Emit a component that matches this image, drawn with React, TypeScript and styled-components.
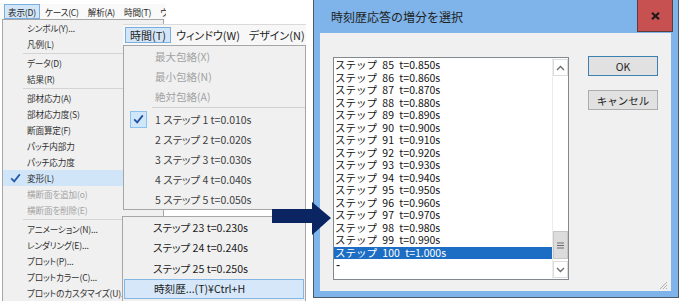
import React from "react";
import styled, { createGlobalStyle } from "styled-components";

const GlobalStyle = createGlobalStyle`
  html, body { margin: 0; padding: 0; background: #ffffff; }
  body { font-family: "Noto Sans CJK JP", "Noto Sans", sans-serif; }
  *, *::before, *::after { box-sizing: border-box; }
`;

const Stage = styled.div`
  position: relative;
  width: 680px;
  height: 301px;
  overflow: hidden;
  background: #ffffff;
`;

/* ---------- first window clip: menu bar + 表示 menu ---------- */
const MainClip = styled.div`
  position: absolute;
  left: 0;
  top: 4px;
  width: 166px;
  height: 297px;
  display: flex;
  flex-direction: column;
`;

const MenuBarTop = styled.div`
  height: 16px;
  display: flex;
  align-items: stretch;
  gap: 1px;
  padding-left: 4px;
  background: #f9f9f9;
  overflow: hidden;
  white-space: nowrap;
`;

const BarItem = styled.div<{ $active?: boolean; $size: number; $pad: number; $tight?: boolean }>`
  display: flex;
  align-items: center;
  padding: 0 ${(p) => p.$pad}px;
  font-size: ${(p) => p.$size}px;
  letter-spacing: ${(p) => (p.$tight ? "-0.2px" : "0")};
  font-feature-settings: "palt";
  color: #262626;
  background: ${(p) => (p.$active ? "#d3e6f8" : "transparent")};
  border: 1px solid ${(p) => (p.$active ? "#7aaee0" : "transparent")};
  flex-shrink: 0;
`;

const DisplayMenu = styled.div`
  margin-left: 2px;
  width: 162px;
  flex: 1;
  background: #f0f0f0;
  border: 1px solid #a6a6a6;
  border-bottom: none;
  display: flex;
  flex-direction: column;
`;

const SmallRow = styled.div<{ $active?: boolean; $disabled?: boolean }>`
  height: 16px;
  display: flex;
  align-items: center;
  font-size: 8.6px;
  letter-spacing: -0.15px;
  font-feature-settings: "palt";
  white-space: nowrap;
  color: ${(p) => (p.$disabled ? "#a4a4a4" : "#303030")};
  background: ${(p) => (p.$active ? "#d1e5f8" : "transparent")};
`;

const SmallGutter = styled.span`
  width: 24px;
  height: 100%;
  display: flex;
  align-items: center;
  justify-content: center;
  flex-shrink: 0;
`;

const SmallSeparator = styled.div`
  height: 3px;
  margin-left: 20px;
  display: flex;
  align-items: center;
  &::after {
    content: "";
    display: block;
    width: 100%;
    height: 1px;
    background: #d4d4d4;
  }
`;

/* ---------- 時間 menu clip ---------- */
const TimeClip = styled.div`
  position: absolute;
  left: 123px;
  top: 24px;
  width: 183px;
  display: flex;
  flex-direction: column;
`;

const MenuBarTime = styled.div`
  height: 21px;
  display: flex;
  align-items: center;
  padding-left: 2px;
  background: #f7f7f7;
  border-top: 1px solid #dadada;
  white-space: nowrap;
  overflow: hidden;
  & > div {
    height: 16px;
  }
`;

const TimeMenu = styled.div`
  background: #f0f0f0;
  border: 1px solid #a6a6a6;
  display: flex;
  flex-direction: column;
`;

const TimeRow = styled.div<{ $disabled?: boolean }>`
  height: 20px;
  display: flex;
  align-items: center;
  font-size: 10.5px;
  font-feature-settings: "palt";
  white-space: nowrap;
  color: ${(p) => (p.$disabled ? "#a2a2a2" : "#404040")};
`;

const TimeGutter = styled.span`
  width: 29px;
  height: 100%;
  display: flex;
  align-items: center;
  justify-content: center;
  flex-shrink: 0;
  margin-right: 2px;
`;

const CheckBox = styled.span`
  width: 17px;
  height: 17px;
  display: flex;
  align-items: center;
  justify-content: center;
  background: #cfe6fb;
  border: 1px solid #8cc2f0;
`;

const TimeSeparator = styled.div`
  height: 3px;
  margin-left: 28px;
  display: flex;
  align-items: center;
  &::after {
    content: "";
    display: block;
    width: 100%;
    height: 1px;
    background: #d2d2d2;
  }
`;

/* ---------- history menu clip ---------- */
const HistoryClip = styled.div`
  position: absolute;
  left: 122px;
  top: 216px;
  width: 184px;
  height: 95px;
  background: #f0f0f0;
  border: 1px solid #a6a6a6;
  display: flex;
  flex-direction: column;
`;

const HistoryRow = styled.div<{ $active?: boolean }>`
  height: 20.5px;
  flex-shrink: 0;
  display: flex;
  align-items: center;
  padding-left: ${(p) => (p.$active ? 29 : 30)}px;
  margin: 0 ${(p) => (p.$active ? 1 : 0)}px;
  font-size: 10.6px;
  font-feature-settings: "palt";
  white-space: nowrap;
  color: #1c1c1c;
  background: ${(p) => (p.$active ? "#d5e7f8" : "transparent")};
  border: ${(p) => (p.$active ? "1px solid #84b6e6" : "none")};
`;

/* ---------- arrow ---------- */
const ArrowMark = styled.svg`
  position: absolute;
  left: 272px;
  top: 201px;
  z-index: 2;
`;

/* ---------- dialog ---------- */
const Dialog = styled.section`
  position: absolute;
  left: 313px;
  top: 0;
  width: 366px;
  height: 298px;
  background: #7eb4e9;
  border: 1px solid #4f5a68;
  border-top: none;
  padding: 0 7px 6px 6px;
  display: flex;
  flex-direction: column;
`;

const TitleBar = styled.header`
  height: 33px;
  flex-shrink: 0;
  display: flex;
  align-items: flex-start;
  justify-content: space-between;
  margin-right: -2px;
`;

const Title = styled.h1`
  margin: 0;
  padding: 8px 0 0 11px;
  font-size: 12px;
  line-height: 18px;
  font-weight: 400;
  color: #1e1e1e;
`;

const CloseButton = styled.div`
  width: 36px;
  height: 32px;
  background: #c75050;
  border: 1px solid #5d3b3b;
  border-top: none;
  display: flex;
  align-items: center;
  justify-content: center;
`;

const Body = styled.div`
  position: relative;
  flex: 1;
  background: #f0f0f0;
  display: flex;
  align-items: flex-start;
  gap: 19px;
  padding: 24px 0 0 13px;
`;

const ListBox = styled.div`
  width: 236px;
  height: 223px;
  background: #ffffff;
  border: 1px solid #828790;
  display: flex;
`;

const ListItems = styled.ul`
  flex: 1;
  margin: 0;
  padding: 1px 0 0 0;
  list-style: none;
  overflow: hidden;
`;

const ListItem = styled.li<{ $selected?: boolean }>`
  height: 12.5px;
  line-height: 12.5px;
  padding-left: 1px;
  font-size: 10.5px;
  word-spacing: 3px;
  white-space: pre;
  color: ${(p) => (p.$selected ? "#ffffff" : "#141414")};
  background: ${(p) => (p.$selected ? "#1b6ec3" : "transparent")};
`;

const CaretRow = styled.li`
  height: 12.5px;
  line-height: 10px;
  padding-left: 2px;
  font-size: 11px;
  font-weight: 700;
  color: #222;
`;

const ScrollBar = styled.div`
  width: 16px;
  display: flex;
  flex-direction: column;
  padding: 1px 0;
  border-left: 1px solid #ececec;
  background: #ffffff;
`;

const ScrollArrow = styled.div`
  height: 17px;
  flex-shrink: 0;
  border: 1px solid #dcdcdc;
  background: #ffffff;
  display: flex;
  align-items: center;
  justify-content: center;
`;

const ScrollSpacer = styled.div`
  flex: 1;
`;

const ScrollThumb = styled.div`
  height: 28px;
  margin-bottom: 2px;
  flex-shrink: 0;
  background: #dcdcdc;
  border: 1px solid #c6c6c6;
  display: flex;
  align-items: center;
  justify-content: center;
`;

const ButtonColumn = styled.div`
  display: flex;
  flex-direction: column;
  gap: 14px;
  margin-top: -1px;
`;

const PushButton = styled.div<{ $default?: boolean }>`
  width: 70px;
  height: 20px;
  display: flex;
  align-items: center;
  justify-content: center;
  background: #e1e1e1;
  border: 1px solid ${(p) => (p.$default ? "#3c7fb1" : "#adadad")};
  font-size: 10.5px;
  color: #1e1e1e;
`;

const Grip = styled.svg`
  position: absolute;
  right: 3px;
  bottom: 1px;
`;

const Check = ({ color = "#2458aa" }: { color?: string }) => (
  <svg width="11" height="10" viewBox="0 0 11 10">
    <path d="M1.2 5.4 L4.2 8.4 L9.8 1.4" fill="none" stroke={color} strokeWidth="1.7" />
  </svg>
);

type DisplayEntry =
  | { sep: true }
  | { label: string; disabled?: boolean; active?: boolean; checked?: boolean };

const displayItems: DisplayEntry[] = [
  { label: "シンボル(Y)..." },
  { label: "凡例(L)" },
  { sep: true },
  { label: "データ(D)" },
  { label: "結果(R)" },
  { sep: true },
  { label: "部材応力(A)" },
  { label: "部材応力度(S)" },
  { label: "断面算定(F)" },
  { label: "パッチ内部力" },
  { label: "パッチ応力度" },
  { label: "変形(L)", active: true, checked: true },
  { label: "横断面を追加(o)", disabled: true },
  { label: "横断面を削除(E)", disabled: true },
  { sep: true },
  { label: "アニメーション(N)..." },
  { label: "レンダリング(E)..." },
  { label: "プロット(P)..." },
  { label: "プロットカラー(C)..." },
  { label: "プロットのカスタマイズ(U)..." },
];

const steps = Array.from({ length: 16 }, (_, i) => 85 + i);

export default function App() {
  return (
    <>
      <GlobalStyle />
      <Stage>
        <MainClip>
          <MenuBarTop>
            <BarItem $active $size={8.6} $pad={3} $tight>表示(D)</BarItem>
            <BarItem $size={8.6} $pad={3} $tight>ケース(C)</BarItem>
            <BarItem $size={8.6} $pad={3} $tight>解析(A)</BarItem>
            <BarItem $size={8.6} $pad={3} $tight>時間(T)</BarItem>
            <BarItem $size={8.6} $pad={3} $tight>ウィンドウ(W)</BarItem>
          </MenuBarTop>
          <DisplayMenu>
            {displayItems.map((it, i) =>
              "sep" in it ? (
                <SmallSeparator key={i} />
              ) : (
                <SmallRow key={i} $active={it.active} $disabled={it.disabled}>
                  <SmallGutter>{it.checked && <Check />}</SmallGutter>
                  {it.label}
                </SmallRow>
              )
            )}
          </DisplayMenu>
        </MainClip>

        <TimeClip>
          <MenuBarTime>
            <BarItem $active $size={11} $pad={4}>時間(T)</BarItem>
            <BarItem $size={11} $pad={4}>ウィンドウ(W)</BarItem>
            <BarItem $size={11} $pad={3}>デザイン(N)</BarItem>
          </MenuBarTime>
          <TimeMenu>
            <TimeRow $disabled><TimeGutter />最大包絡(X)</TimeRow>
            <TimeRow $disabled><TimeGutter />最小包絡(N)</TimeRow>
            <TimeRow $disabled><TimeGutter />絶対包絡(A)</TimeRow>
            <TimeSeparator />
            {[1, 2, 3, 4, 5].map((n) => (
              <TimeRow key={n}>
                <TimeGutter>
                  {n === 1 && (
                    <CheckBox>
                      <Check color="#1f4f9f" />
                    </CheckBox>
                  )}
                </TimeGutter>
                {`${n} ステップ ${n} t=0.0${n}0s`}
              </TimeRow>
            ))}
          </TimeMenu>
        </TimeClip>

        <HistoryClip>
          <HistoryRow>ステップ 23 t=0.230s</HistoryRow>
          <HistoryRow>ステップ 24 t=0.240s</HistoryRow>
          <HistoryRow>ステップ 25 t=0.250s</HistoryRow>
          <HistoryRow $active>時刻歴...(T)¥Ctrl+H</HistoryRow>
        </HistoryClip>

        <Dialog>
          <TitleBar>
            <Title>時刻歴応答の増分を選択</Title>
            <CloseButton>
              <svg width="9" height="8" viewBox="0 0 9 8">
                <path d="M1 0.8 L8 7.2 M8 0.8 L1 7.2" stroke="#1a1a1a" strokeWidth="2.1" />
              </svg>
            </CloseButton>
          </TitleBar>
          <Body>
            <ListBox>
              <ListItems>
                {steps.map((s) => (
                  <ListItem key={s} $selected={s === 100}>
                    {`ステップ ${s} t=${(s / 100).toFixed(3)}s`}
                  </ListItem>
                ))}
                <CaretRow>-</CaretRow>
              </ListItems>
              <ScrollBar>
                <ScrollArrow>
                  <svg width="9" height="6" viewBox="0 0 9 6">
                    <path d="M1 5 L4.5 1.5 L8 5" fill="none" stroke="#6b6b6b" strokeWidth="1.3" />
                  </svg>
                </ScrollArrow>
                <ScrollSpacer />
                <ScrollThumb>
                  <svg width="7" height="7" viewBox="0 0 7 7">
                    <path d="M0 1 H7 M0 3.5 H7 M0 6 H7" stroke="#6a6a6a" strokeWidth="1" />
                  </svg>
                </ScrollThumb>
                <ScrollArrow>
                  <svg width="9" height="6" viewBox="0 0 9 6">
                    <path d="M1 1 L4.5 4.5 L8 1" fill="none" stroke="#6b6b6b" strokeWidth="1.3" />
                  </svg>
                </ScrollArrow>
              </ScrollBar>
            </ListBox>
            <ButtonColumn>
              <PushButton $default>OK</PushButton>
              <PushButton>キャンセル</PushButton>
            </ButtonColumn>
            <Grip width="9" height="9" viewBox="0 0 9 9">
              <path d="M8 1 L1 8 M8 4 L4 8 M8 7 L7 8" stroke="#b0b0b0" strokeWidth="1" />
            </Grip>
          </Body>
        </Dialog>

        <ArrowMark width="60" height="35" viewBox="0 0 60 35">
          <rect x="0" y="8" width="41" height="14" fill="#0b2462" />
          <polygon points="40,1 59,17 40,34" fill="#0b2462" />
        </ArrowMark>
      </Stage>
    </>
  );
}
